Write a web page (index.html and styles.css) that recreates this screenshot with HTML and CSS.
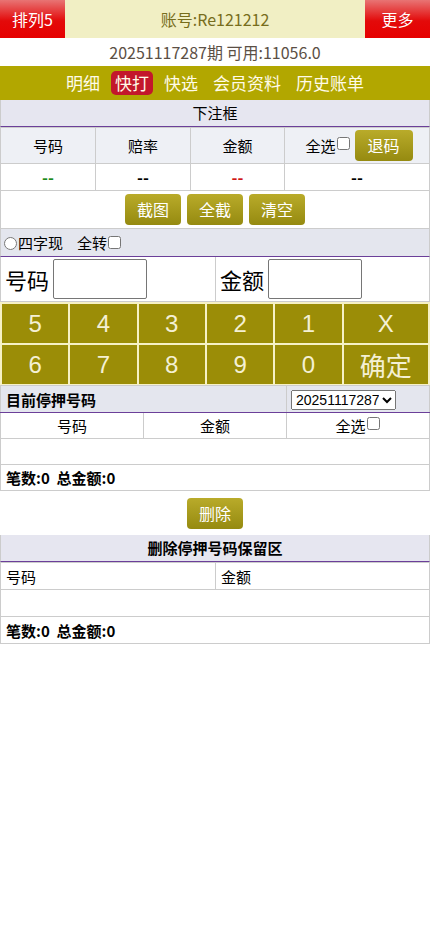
FILE: index.html
```html
<!DOCTYPE html>
<html>
<head>
<meta charset="utf-8">
<meta name="viewport" content="width=device-width, initial-scale=1">
<title>快打</title>
<link rel="stylesheet" href="styles.css">
</head>
<body>

<div class="top">
  <a class="top-btn">排列5</a>
  <div class="account">账号:Re121212</div>
  <a class="top-btn">更多</a>
</div>

<div class="period">20251117287期 可用:11056.0</div>

<div class="nav">
  <a>明细</a>
  <a class="on">快打</a>
  <a>快选</a>
  <a>会员资料</a>
  <a>历史账单</a>
</div>

<!-- 下注框 -->
<div class="title">下注框</div>
<table class="grid bet">
  <tr class="head">
    <td class="c1">号码</td>
    <td class="c2">赔率</td>
    <td class="c3">金额</td>
    <td class="c4">全选<input type="checkbox" class="chk"><a class="btn back">退码</a></td>
  </tr>
  <tr class="dash">
    <td class="green">--</td>
    <td>--</td>
    <td class="red">--</td>
    <td>--</td>
  </tr>
</table>

<div class="tools">
  <a class="btn">截图</a>
  <a class="btn">全截</a>
  <a class="btn">清空</a>
</div>

<div class="opts">
  <label><input type="radio" class="rad">四字现</label>
  <label class="turn">全转<input type="checkbox" class="chk"></label>
</div>

<div class="inputs">
  <div class="field">号码 <input type="text" class="box"></div>
  <div class="field">金额 <input type="text" class="box"></div>
</div>

<div class="keys">
  <a>5</a><a>4</a><a>3</a><a>2</a><a>1</a><a>X</a>
  <a>6</a><a>7</a><a>8</a><a>9</a><a>0</a><a class="ok">确定</a>
</div>

<!-- 目前停押 -->
<table class="grid hold">
  <colgroup><col class="w1"><col class="w1"><col></colgroup>
  <tr class="bar">
    <td colspan="2" class="bold left">目前停押号码</td>
    <td class="sel">
      <select><option>20251117287</option></select>
    </td>
  </tr>
  <tr class="row">
    <td>号码</td>
    <td>金额</td>
    <td>全选<input type="checkbox" class="chk"></td>
  </tr>
  <tr class="row"><td colspan="3">&nbsp;</td></tr>
  <tr class="row"><td colspan="3" class="bold left">笔数:0&nbsp;&nbsp;总金额:0</td></tr>
</table>

<div class="tools plain">
  <a class="btn">删除</a>
</div>

<div class="title bold">删除停押号码保留区</div>
<table class="grid keep">
  <colgroup><col class="w2"><col></colgroup>
  <tr class="row">
    <td class="left">号码</td>
    <td class="left">金额</td>
  </tr>
  <tr class="row"><td colspan="2">&nbsp;</td></tr>
  <tr class="row"><td colspan="2" class="bold left">笔数:0&nbsp;&nbsp;总金额:0</td></tr>
</table>

</body>
</html>
```

FILE: styles.css
```css
body {margin:0; background:#fff; color:#000; font:15px "Noto Sans CJK SC", "Liberation Sans", sans-serif;}
a {cursor:pointer;}

.top {display:flex; height:38px; background:#f1efc4;}
.top-btn {width:65px; display:flex; align-items:center; justify-content:center; color:#fff; font-size:16px; background:linear-gradient(#e87474, #e30a0a 55%, #e60000);}
.account {flex:1; display:flex; align-items:center; justify-content:center; color:#776d1c; font-size:16px;}

.period {height:28px; line-height:28px; text-align:center; color:#5b4f45; font-size:16px;}

.nav {height:34px; background:#b2a700; display:flex; justify-content:center; align-items:center; gap:7px;}
.nav a {color:#fffbe8; font-size:17px; padding:0 4px; line-height:24px;}
.nav a.on {background:#c3172b; border-radius:5px;}

.title {height:26px; line-height:26px; text-align:center; background:#e6e6f0; border-bottom:1px solid #6b3f99; border-left:1px solid #ccc; border-right:1px solid #ccc;}
.bold {font-weight:bold;}
.left {text-align:left !important; padding-left:5px !important;}

.grid {width:100%; border-collapse:collapse; table-layout:fixed;}
.grid td {border:1px solid #ccc; text-align:center; padding:0;}

.bet .c1, .bet .c2 {width:94px;}
.bet .c3 {width:93px;}
.bet .head td {height:35px; background:#eef0f5;}
.bet .head .c4 {padding-left:4px;}
.bet .dash td {height:26px; font-weight:bold; font-size:16px;}
.green {color:#1b8a1b;}
.red {color:#d01515;}

.chk {width:13px; height:13px; margin:0 1px; vertical-align:middle; position:relative; top:-4px;}
.rad {width:13px; height:13px; margin:0 1px 0 3px; vertical-align:middle; position:relative; top:-1px;}

.btn {display:inline-block; color:#fff; font-size:16px; line-height:31px; padding:0 12px; border-radius:4px; background:linear-gradient(#b9ab2a, #958a10);}
.back {margin-left:4px; padding:0 13px;}

.tools {height:37px; display:flex; justify-content:center; align-items:center; gap:6px; border:1px solid #ccc; border-top:none;}
.tools.plain {height:44px; border:none;}

.opts {height:27px; display:flex; align-items:center; background:#e4e6ee; border-bottom:1px solid #6b3f99; border-left:1px solid #ccc; border-right:1px solid #ccc;}
.turn {margin-left:14px;}
.turn .chk {top:-2px;}

.inputs {display:grid; grid-template-columns:215px 1fr; height:44px; border-left:1px solid #ccc; border-right:1px solid #ccc;}
.field {display:flex; align-items:center; padding-left:4px; font-size:22px; gap:4px;}
.field:first-child {border-right:1px solid #ccc;}
.box {width:92px; height:38px; padding:0; margin:0; border:1px solid #767676; border-radius:2px; font-size:22px;}

.keys {display:grid; grid-template-columns:repeat(5, 66fr) 84fr; grid-auto-rows:39px; gap:2px; padding:2px 2px 1px; background:#f6f1c6; border-top:1px solid #ccc;}
.keys a {background:#9b8d07; color:#f4f0d4; display:flex; align-items:center; justify-content:center; font:24px "Liberation Sans", sans-serif;}
.keys a.ok {font:26px "Noto Sans CJK SC", sans-serif;}

.hold .w1 {width:143px;}
.hold .bar td {height:26px; background:#e4e6ee; border-bottom:1px solid #6b3f99;}
.hold .bar .sel {border-left:1px solid #6b3f99; text-align:left; padding-left:4px;}
.hold select {font:14px "Liberation Sans", sans-serif; height:20px; width:105px; vertical-align:middle;}
.hold .row td {height:25px;}
.keep .row td {height:26px;}
.keep .w2 {width:215px;}
```
